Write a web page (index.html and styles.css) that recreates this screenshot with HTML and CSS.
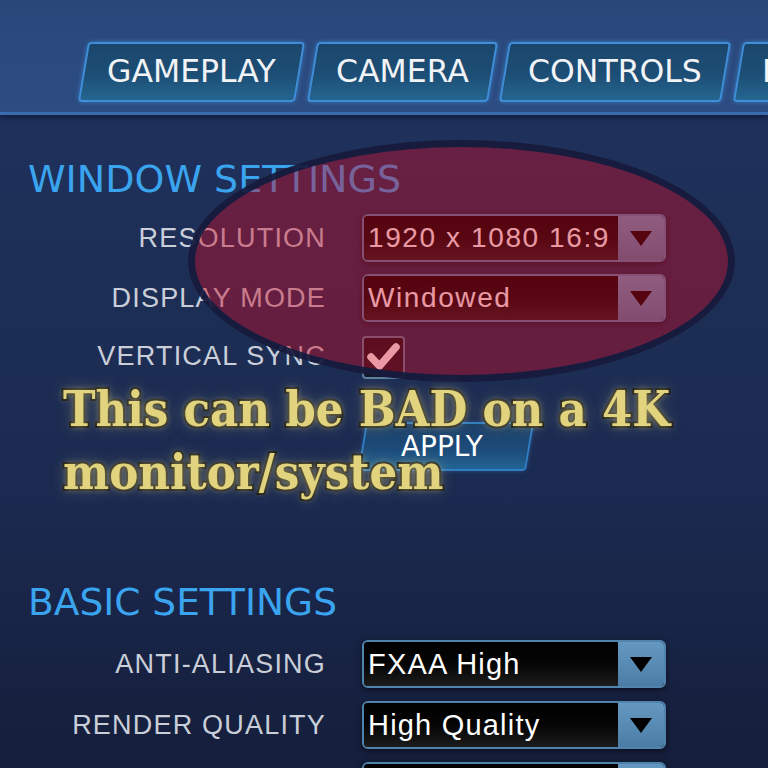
FILE: index.html
```html
<!DOCTYPE html>
<html>
<head>
<meta charset="utf-8">
<link rel="stylesheet" href="styles.css">
</head>
<body>
<div class="page">
  <header class="topbar">
    <nav class="tabs">
      <div class="tab"><span>GAMEPLAY</span></div>
      <div class="tab"><span>CAMERA</span></div>
      <div class="tab"><span>CONTROLS</span></div>
      <div class="tab"><span>INTERFACE</span></div>
    </nav>
  </header>
  <main class="content">
    <section class="section window">
      <h2 class="heading">WINDOW SETTINGS</h2>
      <div class="rows">
        <div class="label">RESOLUTION</div>
        <div class="select"><span class="value">1920 x 1080 16:9</span><span class="arrow"><svg viewBox="0 0 22 15" width="22" height="15"><path d="M0 0H22L11 15Z"/></svg></span></div>
        <div class="label">DISPLAY MODE</div>
        <div class="select"><span class="value">Windowed</span><span class="arrow"><svg viewBox="0 0 22 15" width="22" height="15"><path d="M0 0H22L11 15Z"/></svg></span></div>
        <div class="label">VERTICAL SYNC</div>
        <div class="check-cell"><div class="checkbox"><svg viewBox="0 0 39 39" width="39" height="39"><path d="M7 19L15.5 28L32 9"/></svg></div></div>
        <div></div>
        <div class="apply-cell"><div class="apply"><span>APPLY</span></div></div>
      </div>
    </section>
    <section class="section basic">
      <h2 class="heading">BASIC SETTINGS</h2>
      <div class="rows">
        <div class="label">ANTI-ALIASING</div>
        <div class="select"><span class="value">FXAA High</span><span class="arrow"><svg viewBox="0 0 22 15" width="22" height="15"><path d="M0 0H22L11 15Z"/></svg></span></div>
        <div class="label">RENDER QUALITY</div>
        <div class="select"><span class="value">High Quality</span><span class="arrow"><svg viewBox="0 0 22 15" width="22" height="15"><path d="M0 0H22L11 15Z"/></svg></span></div>
        <div class="label"></div>
        <div class="select"><span class="value"></span><span class="arrow"><svg viewBox="0 0 22 15" width="22" height="15"><path d="M0 0H22L11 15Z"/></svg></span></div>
      </div>
    </section>
  </main>
  <div class="highlight"></div>
  <div class="caption">This can be BAD on a 4K<br>monitor/system</div>
</div>
</body>
</html>
```

FILE: styles.css
```css
html, body {
  margin: 0;
  padding: 0;
  height: 100%;
  overflow: hidden;
}
body {
  background: #17223f;
  font-family: "DejaVu Sans", sans-serif;
}
.page {
  position: relative;
  width: 768px;
  height: 768px;
  overflow: hidden;
  background: linear-gradient(180deg, #203360 0px, #1e3058 200px, #1b2a50 500px, #151e3b 768px);
}
.topbar {
  height: 115px;
  box-sizing: border-box;
  padding-top: 42px;
  background: linear-gradient(180deg, #2a477a, #2c4c82);
  border-bottom: 3px solid #3b6cb2;
  box-shadow: 0 3px 4px rgba(10, 20, 45, 0.6);
}
.tabs {
  display: flex;
  gap: 12px;
  padding-left: 83px;
  white-space: nowrap;
}
.tab {
  flex-shrink: 0;
  height: 60px;
  box-sizing: border-box;
  padding: 0 22px;
  display: flex;
  align-items: center;
  transform: skewX(-9.5deg);
  border: 2px solid #3e8fd8;
  border-radius: 4px;
  background: linear-gradient(180deg, #1b466c 0%, #1d4e75 55%, #246690 100%);
  box-shadow: 0 0 5px rgba(70, 160, 240, 0.55);
}
.tab span {
  display: block;
  transform: skewX(9.5deg);
  color: #f1f3f6;
  font-size: 31.5px;
  line-height: 1;
}
.content {
  padding-top: 42px;
}
.section {
  padding-left: 28px;
}
.heading {
  margin: 0;
  font-weight: normal;
  font-size: 38px;
  line-height: 44px;
  color: #3aa4ef;
}
.window .heading {
  margin-bottom: 13px;
}
.basic {
  margin-top: 109px;
}
.basic .heading {
  font-size: 37.5px;
  margin-bottom: 16px;
}
.rows {
  display: grid;
  grid-template-columns: 298px 304px;
  column-gap: 36px;
  row-gap: 12px;
  align-items: center;
}
.basic .rows {
  row-gap: 13px;
}
.label {
  text-align: right;
  font-family: "Liberation Sans", sans-serif;
  font-size: 27px;
  line-height: 1;
  letter-spacing: 1.2px;
  color: #c9ced9;
  white-space: nowrap;
}
.select {
  height: 48px;
  box-sizing: border-box;
  display: flex;
  border: 2px solid #5084ad;
  border-radius: 6px;
  overflow: hidden;
  background: #000;
  box-shadow: 0 2px 6px rgba(0, 0, 0, 0.55);
}
.value {
  flex: 1;
  display: flex;
  align-items: center;
  padding-left: 4px;
  background: linear-gradient(180deg, #000 0%, #050505 50%, #1c1c1c 100%);
  color: #ffffff;
  font-family: "Liberation Sans", sans-serif;
  font-size: 28px;
  letter-spacing: 1.6px;
  white-space: nowrap;
}
.basic .value {
  font-size: 29px;
  letter-spacing: 1.2px;
}
.arrow {
  width: 46px;
  display: flex;
  align-items: center;
  justify-content: center;
  background: linear-gradient(180deg, #6498c0 0%, #5689b2 60%, #4a7ba4 100%);
}
.arrow svg path {
  fill: #000;
}
.check-cell {
  padding-top: 2px;
}
.checkbox {
  width: 43px;
  height: 43px;
  box-sizing: border-box;
  border: 2px solid #5a7ea0;
  border-radius: 4px;
  background: linear-gradient(180deg, #0c0f1a, #141a28);
}
.checkbox svg path {
  fill: none;
  stroke: #ffffff;
  stroke-width: 7.5;
  stroke-linecap: round;
  stroke-linejoin: round;
}
.apply-cell {
  margin-top: 31px;
}
.apply {
  width: 168px;
  height: 49px;
  box-sizing: border-box;
  display: flex;
  align-items: center;
  justify-content: center;
  padding-right: 8px;
  transform: skewX(-9.5deg);
  border: 2px solid #2f7dc2;
  border-radius: 4px;
  background: linear-gradient(180deg, #1b3e68 0%, #1d4d7c 60%, #226494 100%);
  box-shadow: 0 0 4px rgba(60, 140, 220, 0.4);
}
.apply span {
  transform: skewX(9.5deg);
  color: #ffffff;
  font-size: 28px;
  line-height: 1;
}
.highlight {
  position: absolute;
  left: 188px;
  top: 140px;
  width: 547px;
  height: 242px;
  box-sizing: border-box;
  border: 7px solid rgba(16, 28, 62, 0.9);
  border-radius: 50%;
  background: rgba(205, 10, 35, 0.42);
}
.caption {
  position: absolute;
  left: 63px;
  top: 377px;
  font-family: "DejaVu Serif Condensed", "DejaVu Serif", serif;
  font-stretch: condensed;
  font-weight: 700;
  font-size: 48.5px;
  line-height: 63px;
  color: #e2d47e;
  white-space: nowrap;
  -webkit-text-stroke: 4px #111111;
  paint-order: stroke fill;
  text-shadow: 0 0 6px rgba(210, 200, 140, 0.6), 0 0 16px rgba(210, 200, 140, 0.4);
}
```
